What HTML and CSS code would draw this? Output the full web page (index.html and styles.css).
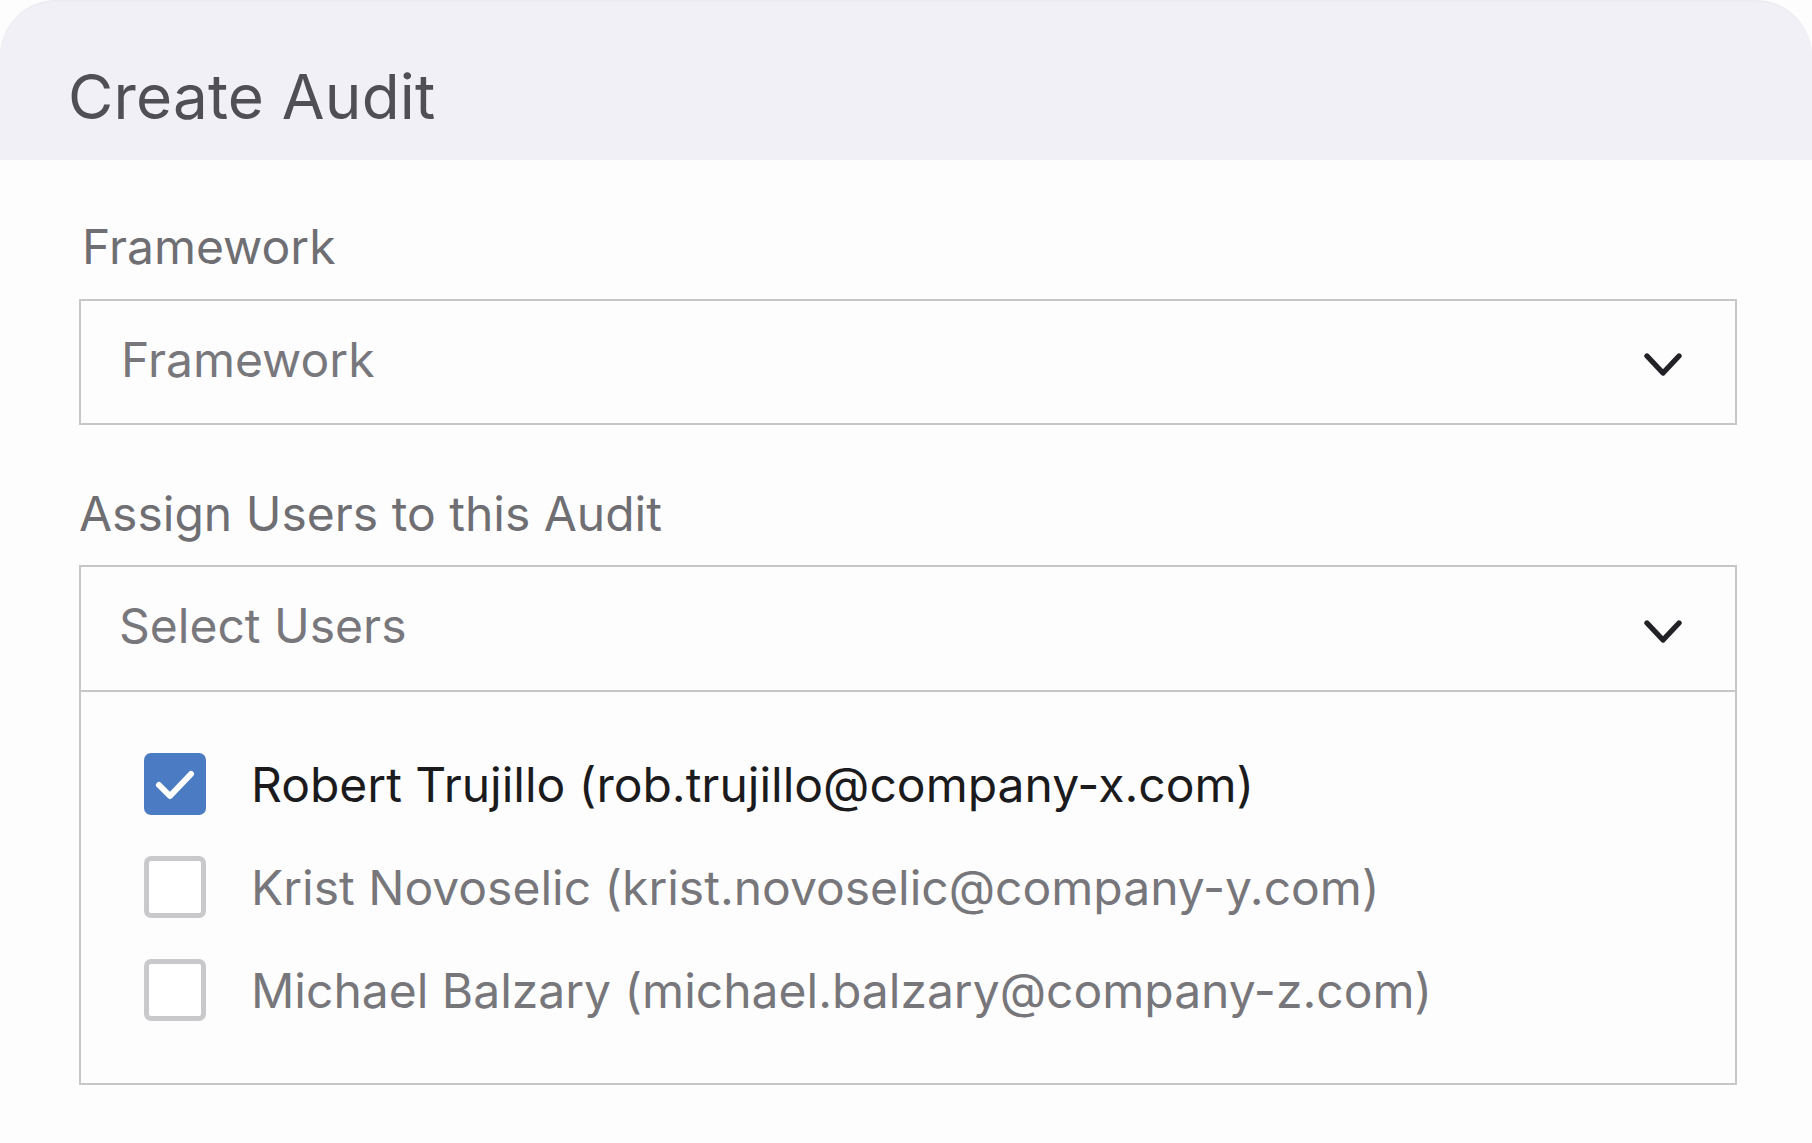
FILE: index.html
```html
<!DOCTYPE html>
<html lang="en">
<head>
<meta charset="utf-8">
<title>Create Audit</title>
<link rel="stylesheet" href="styles.css">
</head>
<body>
<div class="card">
  <header class="card-header">
    <h1 class="title">Create Audit</h1>
  </header>
  <main class="card-body">
    <div class="field">
      <label class="label label-framework">Framework</label>
      <div class="select">
        <span class="select-text">Framework</span>
        <svg class="chevron" width="40" height="28" viewBox="0 0 40 28"><polyline points="4,5 20,22 36,5" fill="none" stroke="#222226" stroke-width="5.4" stroke-linecap="round" stroke-linejoin="round"/></svg>
      </div>
    </div>
    <div class="field field-users">
      <label class="label">Assign Users to this Audit</label>
      <div class="multiselect">
        <div class="select select-head">
          <span class="select-text">Select Users</span>
          <svg class="chevron" width="40" height="28" viewBox="0 0 40 28"><polyline points="4,5 20,22 36,5" fill="none" stroke="#222226" stroke-width="5.4" stroke-linecap="round" stroke-linejoin="round"/></svg>
        </div>
        <ul class="options">
          <li class="option checked">
            <span class="box box-on"><svg width="62" height="62" viewBox="0 0 62 62"><polyline points="15,32 26,43 47,21" fill="none" stroke="#ffffff" stroke-width="6" stroke-linecap="round" stroke-linejoin="round"/></svg></span>
            <span class="option-text">Robert Trujillo (rob.trujillo@company-x.com)</span>
          </li>
          <li class="option">
            <span class="box"></span>
            <span class="option-text">Krist Novoselic (krist.novoselic@company-y.com)</span>
          </li>
          <li class="option">
            <span class="box"></span>
            <span class="option-text">Michael Balzary (michael.balzary@company-z.com)</span>
          </li>
        </ul>
      </div>
    </div>
  </main>
</div>
</body>
</html>
```
FILE: styles.css
```css
* { box-sizing: border-box; }
html, body { margin: 0; padding: 0; }
body {
  background: #fefdfe;
  font-family: "Inter", "Noto Sans", sans-serif;
  width: 1812px;
  height: 1143px;
  overflow: hidden;
}
.card { width: 100%; }
.card-header {
  height: 160px;
  background: #f1f0f6;
  border-radius: 56px 56px 0 0;
  border-top: 2px solid #ececf1;
  display: flex;
  align-items: center;
  padding-left: 68px;
  padding-top: 30px;
}
.title {
  margin: 0;
  font-size: 62px;
  font-weight: 400;
  color: #4f4f55;
  letter-spacing: 0.2px;
}
.card-body {
  padding: 58px 75px 0 79px;
}
.field { display: flex; flex-direction: column; }
.field-users { margin-top: 60px; }
.label {
  font-size: 48px;
  line-height: 58px;
  color: #6e6e73;
  margin-bottom: 23px;
}
.label-framework { padding-left: 3px; }
.field-users .label { margin-bottom: 22px; }
.select {
  height: 126px;
  border: 2px solid #c7c7c9;
  display: flex;
  align-items: center;
  justify-content: space-between;
  padding: 0 52px 0 40px;
  background: #fefdfe;
}
.select-text {
  font-size: 48px;
  color: #77777c;
  padding-bottom: 6px;
}
.chevron { display: block; margin-top: 6px; }
.multiselect {
  border: 2px solid #c7c7c9;
}
.multiselect .select-head {
  border: none;
  border-bottom: 2px solid #c7c7c9;
  height: 125px;
  padding-left: 38px;
}
.options {
  list-style: none;
  margin: 0;
  padding: 61px 0 62px 63px;
  display: flex;
  flex-direction: column;
  gap: 41px;
}
.option {
  display: flex;
  align-items: center;
  gap: 45px;
  height: 62px;
}
.box {
  width: 62px;
  height: 62px;
  flex: none;
  border: 5px solid #c9c9cb;
  border-radius: 7px;
  background: #ffffff;
}
.box-on {
  border: none;
  background: #4a7bc3;
}
.box-on svg { display: block; }
.option-text {
  font-size: 48px;
  color: #77777b;
  white-space: nowrap;
}
.checked .option-text { color: #1b1b1d; }
```
